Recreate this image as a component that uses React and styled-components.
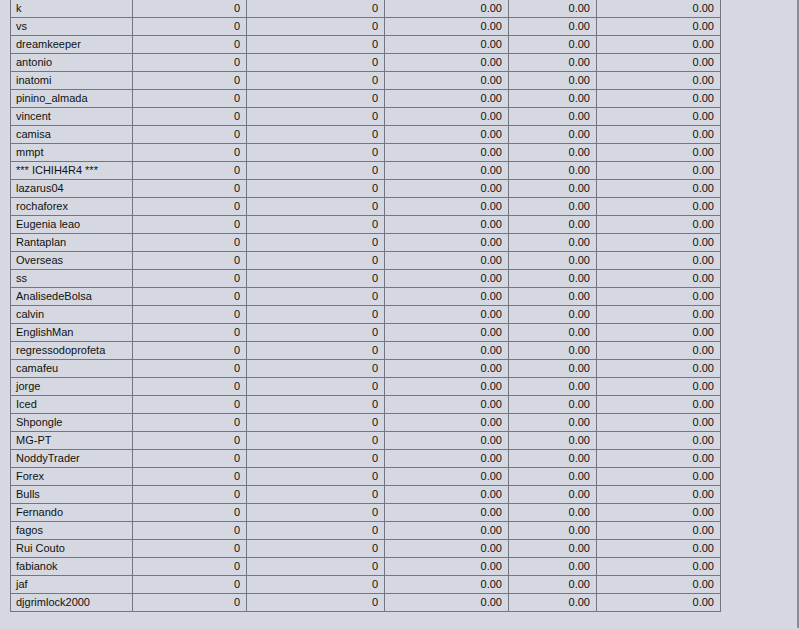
import React from 'react';
import styled, { createGlobalStyle } from 'styled-components';

const GlobalStyle = createGlobalStyle`
  html, body {
    margin: 0;
    padding: 0;
    background: #d5d8e0;
    overflow: hidden;
  }
`;

const Page = styled.div`
  height: 100vh;
  box-sizing: border-box;
  padding-left: 10px;
  border-right: 2px solid #8b8d96;
  font-family: "Liberation Sans", Arial, sans-serif;
  font-size: 11px;
  color: #111;
`;

const Grid = styled.table`
  margin-top: -1px;
  border-collapse: collapse;
  table-layout: fixed;
  width: 711px;
  border: 1px solid #737580;
`;

const Cell = styled.td`
  height: 17px;
  padding: 0 ${p => (p.$num ? '6px' : '5px')};
  border: 1px solid #737580;
  text-align: ${p => (p.$num ? 'right' : 'left')};
  white-space: nowrap;
  overflow: hidden;
  line-height: 17px;
`;

const names = [
  'k', 'vs', 'dreamkeeper', 'antonio', 'inatomi', 'pinino_almada', 'vincent',
  'camisa', 'mmpt', '*** ICHIH4R4 ***', 'lazarus04', 'rochaforex', 'Eugenia leao',
  'Rantaplan', 'Overseas', 'ss', 'AnalisedeBolsa', 'calvin', 'EnglishMan',
  'regressodoprofeta', 'camafeu', 'jorge', 'Iced', 'Shpongle', 'MG-PT',
  'NoddyTrader', 'Forex', 'Bulls', 'Fernando', 'fagos', 'Rui Couto', 'fabianok',
  'jaf', 'djgrimlock2000',
];

const widths = [122, 114, 138, 124, 88, 124];

export default function App() {
  return (
    <Page>
      <GlobalStyle />
      <Grid>
        <colgroup>
          {widths.map((w, i) => <col key={i} style={{ width: w }} />)}
        </colgroup>
        <tbody>
          {names.map(n => (
            <tr key={n}>
              <Cell>{n}</Cell>
              <Cell $num>0</Cell>
              <Cell $num>0</Cell>
              <Cell $num>0.00</Cell>
              <Cell $num>0.00</Cell>
              <Cell $num>0.00</Cell>
            </tr>
          ))}
        </tbody>
      </Grid>
    </Page>
  );
}
